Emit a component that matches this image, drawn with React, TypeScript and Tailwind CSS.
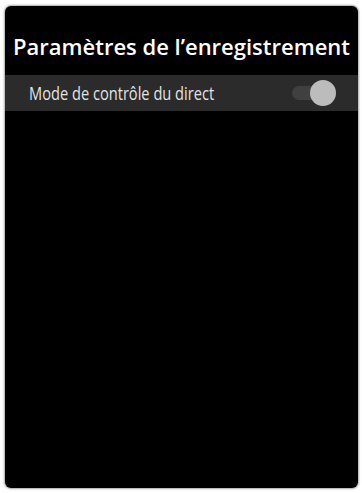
export default function App() {
  return (
    <div className="w-[362px] h-[493px] bg-white pt-[6px] pl-[5px] pr-[4px] pb-[5px]">
      <div className="w-full h-full bg-black rounded-[6px] shadow-[0_0_2px_1px_rgba(0,0,0,0.35)] flex flex-col overflow-hidden">
        <div className="h-[69px] flex items-center justify-center pt-[12px]">
          <h1 className="text-white text-[22px] font-semibold whitespace-nowrap" style={{ fontFamily: '"Open Sans", sans-serif' }}>
            Paramètres de l’enregistrement
          </h1>
        </div>
        <div className="h-[36px] bg-[#2b2b2b] flex items-center pl-[24px] pr-[22px]">
          <div className="flex-1 overflow-visible">
            <span className="inline-block text-[#e2e2e2] text-[19px] whitespace-nowrap scale-x-[0.77] origin-left" style={{ fontFamily: '"Open Sans", sans-serif' }}>
              Mode de contrôle du direct
            </span>
          </div>
          <div className="relative w-[44px] h-[24px] flex items-center">
            <div className="w-[32px] h-[14px] rounded-full bg-[#404040]" />
            <div className="absolute right-0 top-0 w-[26px] h-[26px] -mt-[1px] rounded-full bg-[#bcbcbc]" />
          </div>
        </div>
      </div>
    </div>
  );
}
